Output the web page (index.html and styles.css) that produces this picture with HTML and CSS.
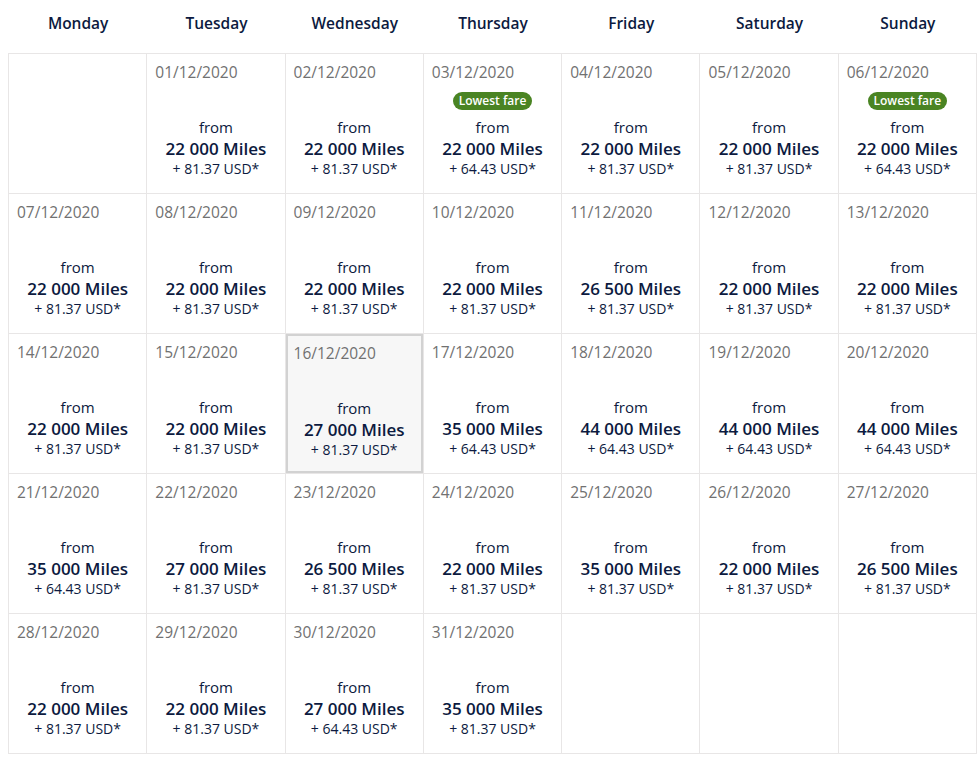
FILE: index.html
```html
<!DOCTYPE html>
<html lang="en">
<head>
<meta charset="utf-8">
<title>Fare calendar</title>
<link rel="stylesheet" href="styles.css">
</head>
<body>
<div class="calendar">
  <div class="weekdays">
    <div class="wd">Monday</div>
    <div class="wd">Tuesday</div>
    <div class="wd">Wednesday</div>
    <div class="wd">Thursday</div>
    <div class="wd">Friday</div>
    <div class="wd">Saturday</div>
    <div class="wd">Sunday</div>
  </div>
  <div class="grid">
    <div class="cell empty"></div>
    <div class="cell"><div class="date">01/12/2020</div><div class="slot"></div><div class="from">from</div><div class="miles">22 000 Miles</div><div class="usd">+ 81.37 USD*</div></div>
    <div class="cell"><div class="date">02/12/2020</div><div class="slot"></div><div class="from">from</div><div class="miles">22 000 Miles</div><div class="usd">+ 81.37 USD*</div></div>
    <div class="cell"><div class="date">03/12/2020</div><div class="slot"><span class="badge">Lowest fare</span></div><div class="from">from</div><div class="miles">22 000 Miles</div><div class="usd">+ 64.43 USD*</div></div>
    <div class="cell"><div class="date">04/12/2020</div><div class="slot"></div><div class="from">from</div><div class="miles">22 000 Miles</div><div class="usd">+ 81.37 USD*</div></div>
    <div class="cell"><div class="date">05/12/2020</div><div class="slot"></div><div class="from">from</div><div class="miles">22 000 Miles</div><div class="usd">+ 81.37 USD*</div></div>
    <div class="cell"><div class="date">06/12/2020</div><div class="slot"><span class="badge">Lowest fare</span></div><div class="from">from</div><div class="miles">22 000 Miles</div><div class="usd">+ 64.43 USD*</div></div>

    <div class="cell"><div class="date">07/12/2020</div><div class="slot"></div><div class="from">from</div><div class="miles">22 000 Miles</div><div class="usd">+ 81.37 USD*</div></div>
    <div class="cell"><div class="date">08/12/2020</div><div class="slot"></div><div class="from">from</div><div class="miles">22 000 Miles</div><div class="usd">+ 81.37 USD*</div></div>
    <div class="cell"><div class="date">09/12/2020</div><div class="slot"></div><div class="from">from</div><div class="miles">22 000 Miles</div><div class="usd">+ 81.37 USD*</div></div>
    <div class="cell"><div class="date">10/12/2020</div><div class="slot"></div><div class="from">from</div><div class="miles">22 000 Miles</div><div class="usd">+ 81.37 USD*</div></div>
    <div class="cell"><div class="date">11/12/2020</div><div class="slot"></div><div class="from">from</div><div class="miles">26 500 Miles</div><div class="usd">+ 81.37 USD*</div></div>
    <div class="cell"><div class="date">12/12/2020</div><div class="slot"></div><div class="from">from</div><div class="miles">22 000 Miles</div><div class="usd">+ 81.37 USD*</div></div>
    <div class="cell"><div class="date">13/12/2020</div><div class="slot"></div><div class="from">from</div><div class="miles">22 000 Miles</div><div class="usd">+ 81.37 USD*</div></div>

    <div class="cell"><div class="date">14/12/2020</div><div class="slot"></div><div class="from">from</div><div class="miles">22 000 Miles</div><div class="usd">+ 81.37 USD*</div></div>
    <div class="cell"><div class="date">15/12/2020</div><div class="slot"></div><div class="from">from</div><div class="miles">22 000 Miles</div><div class="usd">+ 81.37 USD*</div></div>
    <div class="cell selected"><div class="date">16/12/2020</div><div class="slot"></div><div class="from">from</div><div class="miles">27 000 Miles</div><div class="usd">+ 81.37 USD*</div></div>
    <div class="cell"><div class="date">17/12/2020</div><div class="slot"></div><div class="from">from</div><div class="miles">35 000 Miles</div><div class="usd">+ 64.43 USD*</div></div>
    <div class="cell"><div class="date">18/12/2020</div><div class="slot"></div><div class="from">from</div><div class="miles">44 000 Miles</div><div class="usd">+ 64.43 USD*</div></div>
    <div class="cell"><div class="date">19/12/2020</div><div class="slot"></div><div class="from">from</div><div class="miles">44 000 Miles</div><div class="usd">+ 64.43 USD*</div></div>
    <div class="cell"><div class="date">20/12/2020</div><div class="slot"></div><div class="from">from</div><div class="miles">44 000 Miles</div><div class="usd">+ 64.43 USD*</div></div>

    <div class="cell"><div class="date">21/12/2020</div><div class="slot"></div><div class="from">from</div><div class="miles">35 000 Miles</div><div class="usd">+ 64.43 USD*</div></div>
    <div class="cell"><div class="date">22/12/2020</div><div class="slot"></div><div class="from">from</div><div class="miles">27 000 Miles</div><div class="usd">+ 81.37 USD*</div></div>
    <div class="cell"><div class="date">23/12/2020</div><div class="slot"></div><div class="from">from</div><div class="miles">26 500 Miles</div><div class="usd">+ 81.37 USD*</div></div>
    <div class="cell"><div class="date">24/12/2020</div><div class="slot"></div><div class="from">from</div><div class="miles">22 000 Miles</div><div class="usd">+ 81.37 USD*</div></div>
    <div class="cell"><div class="date">25/12/2020</div><div class="slot"></div><div class="from">from</div><div class="miles">35 000 Miles</div><div class="usd">+ 81.37 USD*</div></div>
    <div class="cell"><div class="date">26/12/2020</div><div class="slot"></div><div class="from">from</div><div class="miles">22 000 Miles</div><div class="usd">+ 81.37 USD*</div></div>
    <div class="cell"><div class="date">27/12/2020</div><div class="slot"></div><div class="from">from</div><div class="miles">26 500 Miles</div><div class="usd">+ 81.37 USD*</div></div>

    <div class="cell"><div class="date">28/12/2020</div><div class="slot"></div><div class="from">from</div><div class="miles">22 000 Miles</div><div class="usd">+ 81.37 USD*</div></div>
    <div class="cell"><div class="date">29/12/2020</div><div class="slot"></div><div class="from">from</div><div class="miles">22 000 Miles</div><div class="usd">+ 81.37 USD*</div></div>
    <div class="cell"><div class="date">30/12/2020</div><div class="slot"></div><div class="from">from</div><div class="miles">27 000 Miles</div><div class="usd">+ 64.43 USD*</div></div>
    <div class="cell"><div class="date">31/12/2020</div><div class="slot"></div><div class="from">from</div><div class="miles">35 000 Miles</div><div class="usd">+ 81.37 USD*</div></div>
    <div class="cell empty"></div>
    <div class="cell empty"></div>
    <div class="cell empty"></div>
  </div>
</div>
</body>
</html>
```

FILE: styles.css
```css
* { box-sizing: border-box; }
html, body { margin: 0; padding: 0; background: #ffffff; }
body {
  font-family: "Open Sans", "Noto Sans", "DejaVu Sans", sans-serif;
  color: #0c1a40;
}
.calendar {
  width: 969px;
  margin-left: 8px;
}
.weekdays {
  display: grid;
  grid-template-columns: repeat(7, 1fr);
  height: 53px;
  padding-left: 1px;
}
.wd {
  text-align: center;
  font-weight: 600;
  font-size: 15.5px;
  line-height: 20px;
  padding-top: 13px;
  color: #0c1a40;
}
.grid {
  display: grid;
  grid-template-columns: repeat(7, 1fr);
  grid-auto-rows: 140px;
  border-top: 1px solid #e8e6e6;
  border-left: 1px solid #e8e6e6;
}
.cell {
  border-right: 1px solid #e8e6e6;
  border-bottom: 1px solid #e8e6e6;
  display: flex;
  flex-direction: column;
  align-items: center;
  text-align: center;
}
.cell.selected {
  background: #f7f7f7;
  box-shadow: inset 0 0 0 2px #d2d2d2;
  padding-top: 1px;
}
.date {
  align-self: stretch;
  text-align: left;
  padding: 8px 0 0 8px;
  font-size: 15.5px;
  line-height: 20px;
  color: #717171;
}
.slot {
  height: 35px;
  padding-top: 10px;
  display: flex;
  justify-content: center;
  align-items: flex-start;
}
.badge {
  display: block;
  height: 18px;
  line-height: 18px;
  padding: 0 6px;
  border-radius: 9px;
  background: #4a8423;
  color: #ffffff;
  font-size: 12px;
  font-weight: 600;
}
.from {
  font-size: 15px;
  line-height: 20px;
  color: #0c1a40;
}
.miles {
  font-size: 17px;
  line-height: 22px;
  margin-top: 1px;
  font-weight: 600;
  color: #0c1a40;
}
.usd {
  font-size: 14px;
  line-height: 18px;
  color: #0c1a40;
}
```
